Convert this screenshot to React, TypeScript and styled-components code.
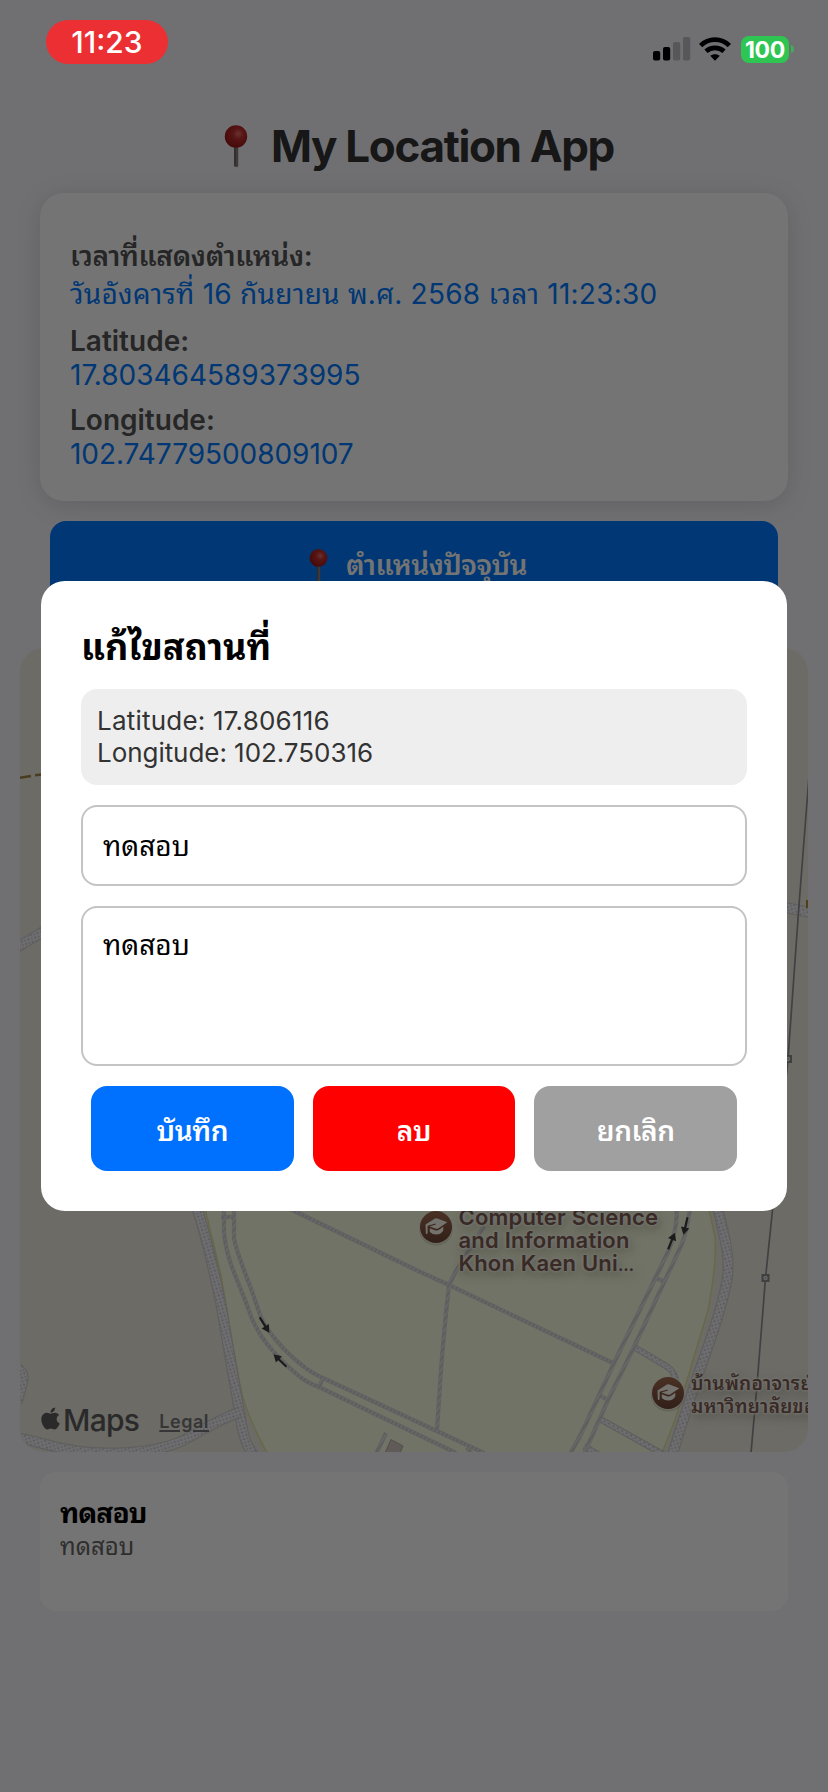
import React from "react";
import styled, { createGlobalStyle } from "styled-components";
import { FaApple } from "react-icons/fa";

const fontStack = `Inter, "Noto Sans Thai Looped", Loma, Waree, "Noto Sans Thai", "Noto Sans", sans-serif`;

const GlobalStyle = createGlobalStyle`
  * { box-sizing: border-box; }
  body {
    margin: 0;
    background: #f6f6fc;
    font-family: ${fontStack};
    -webkit-font-smoothing: antialiased;
  }
`;

const Screen = styled.div`
  position: relative;
  width: 828px;
  height: 1792px;
  overflow: hidden;
  background: #f6f6fc;
`;

const StatusBar = styled.header`
  position: absolute;
  inset: 0 0 auto 0;
  z-index: 3;
  height: 88px;
  padding: 20px 34px 0 46px;
  display: flex;
  justify-content: space-between;
  align-items: flex-start;
`;

const TimePill = styled.div`
  width: 122px;
  height: 44px;
  border-radius: 22px;
  background: #eb2f33;
  color: #fff;
  font-size: 30px;
  font-weight: 500;
  line-height: 45px;
  text-align: center;
`;

const StatusIcons = styled.div`
  display: flex;
  align-items: center;
  margin-top: 15px;
  height: 28px;
`;

const Battery = styled.div`
  width: 48px;
  height: 27px;
  border-radius: 8px;
  margin-left: 10px;
  background: #2fc552;
  color: #fff;
  font-size: 23px;
  font-weight: 700;
  line-height: 28px;
  letter-spacing: -0.3px;
  text-align: center;
`;

const Content = styled.main`
  display: flex;
  flex-direction: column;
  padding-top: 120px;
`;

const Title = styled.h1`
  margin: 0;
  display: flex;
  justify-content: center;
  align-items: center;
  gap: 13px;
  height: 52px;
  font-size: 44px;
  font-weight: 700;
  line-height: 52px;
  letter-spacing: -1.35px;
  color: #333;
`;

const InfoCard = styled.section`
  margin: 21px 40px 0;
  height: 308px;
  padding: 44px 30px 30px;
  border-radius: 24px;
  background: #fff;
  box-shadow: 0 4px 26px rgba(0, 0, 0, 0.13);
  display: flex;
  flex-direction: column;
  gap: 11px;
`;

const Field = styled.div<{ $line?: number }>`
  font-size: 28px;
  line-height: ${(p) => p.$line ?? 34}px;
  white-space: nowrap;
`;

const Label = styled.div<{ $spacing?: number }>`
  font-weight: 600;
  letter-spacing: ${(p) => p.$spacing ?? 0}px;
  color: #555;
`;

const Value = styled.div<{ $spacing?: number }>`
  letter-spacing: ${(p) => p.$spacing ?? 0}px;
  color: #007aff;
`;

const LocateButton = styled.button`
  margin: 20px 50px 0;
  height: 88px;
  border: 0;
  border-radius: 16px;
  background: #007aff;
  color: #fff;
  font: 600 28px/34px ${fontStack};
  letter-spacing: -0.5px;
  display: flex;
  align-items: center;
  justify-content: center;
  gap: 10px;
`;

const MapFrame = styled.section`
  position: relative;
  margin: 39px 20px 0;
  height: 804px;
  border-radius: 24px;
  overflow: hidden;
  background: #edebe0;
`;

const MapCanvas = styled.svg`
  display: block;
`;

const Poi = styled.div<{ $x: number; $y: number }>`
  position: absolute;
  left: ${(p) => p.$x}px;
  top: ${(p) => p.$y}px;
  display: flex;
  align-items: flex-start;
  gap: 6px;
`;

const PoiText = styled.div<{ $size: number; $spacing: number }>`
  margin-top: -2px;
  font-size: ${(p) => p.$size}px;
  line-height: 23px;
  letter-spacing: ${(p) => p.$spacing}px;
  font-weight: 600;
  color: #7d5c50;
  white-space: pre;
  text-shadow: 0 0 3px #fffdf8, 0 0 3px #fffdf8, 0 0 4px #fffdf8, 2px 4px 10px rgba(80, 80, 40, 0.5);
`;

const Ellipsis = styled.span`
  font-size: 16px;
  font-weight: 700;
  line-height: 1;
`;

const Attribution = styled.div`
  position: absolute;
  left: 18px;
  bottom: 13px;
  display: flex;
  align-items: center;
  color: #5d5d5d;
  height: 38px;

  svg {
    margin-bottom: 4px;
  }
`;

const MapsWord = styled.span`
  font-size: 30px;
  font-weight: 500;
  letter-spacing: -0.7px;
  line-height: 38px;
`;

const Legal = styled.a`
  margin-left: 20px;
  font-size: 18px;
  font-weight: 600;
  letter-spacing: 0.5px;
  line-height: 38px;
  color: #777;
  text-decoration: underline;
  text-decoration-thickness: 2px;
  text-underline-offset: 2px;
  padding-top: 3px;
`;

const PlaceCard = styled.article`
  margin: 20px 40px 0;
  height: 139px;
  padding: 22px 20px;
  border-radius: 16px;
  background: #fff;
`;

const PlaceName = styled.div`
  font-size: 28px;
  font-weight: 700;
  line-height: 38px;
  letter-spacing: -0.9px;
  color: #000;
`;

const PlaceNote = styled.div`
  font-size: 24px;
  line-height: 30px;
  color: #666;
`;

const Overlay = styled.div`
  position: absolute;
  inset: 0;
  z-index: 2;
  background: rgba(0, 0, 0, 0.545);
  display: flex;
  align-items: center;
  justify-content: center;
`;

const Modal = styled.div`
  width: 746px;
  height: 630px;
  padding: 40px;
  border-radius: 24px;
  background: #fff;
  display: flex;
  flex-direction: column;
  gap: 20px;
`;

const ModalTitle = styled.h2`
  margin: 0;
  height: 48px;
  font-size: 36px;
  font-weight: 700;
  line-height: 52px;
  white-space: nowrap;
  color: #000;
`;

const Coordinates = styled.div`
  height: 96px;
  padding: 16px;
  border-radius: 16px;
  background: #eee;
  color: #333;
  font-size: 26px;
  line-height: 32px;
`;

const Coordinate = styled.div<{ $spacing: number }>`
  letter-spacing: ${(p) => p.$spacing}px;
`;

const inputStyles = `
  display: block;
  width: 100%;
  border: 2px solid #c4c4c4;
  border-radius: 16px;
  background: #fff;
  color: #000;
  font: 400 28px/38px ${fontStack};
  outline: none;
  resize: none;
  flex: none;
`;

const TextInput = styled.input`
  ${inputStyles}
  height: 81px;
  padding: 0 20px 4px;
`;

const TextArea = styled.textarea`
  ${inputStyles}
  height: 160px;
  padding: 18px 20px;
`;

const Actions = styled.div`
  display: flex;
  justify-content: space-around;
  padding: 0 10px;
  gap: 19px;
`;

const ActionButton = styled.button<{ $tone: string }>`
  flex: 1;
  height: 85px;
  padding: 4px 0 0;
  border: 0;
  border-radius: 16px;
  background: ${(p) => p.$tone};
  color: #fff;
  font: 600 28px/34px ${fontStack};
  letter-spacing: -0.4px;
`;

const PushPin = ({ size, id }: { size: number; id: string }) => (
  <svg width={size} height={size} viewBox="0 0 44 44">
    <defs>
      <radialGradient id={id} cx="0.6" cy="0.38" r="0.65">
        <stop offset="0" stopColor="#e5706a" />
        <stop offset="0.35" stopColor="#c23030" />
        <stop offset="1" stopColor="#981616" />
      </radialGradient>
    </defs>
    <rect x="20.2" y="21" width="4" height="22" rx="1.6" fill="#8b7d7b" />
    <rect x="20.2" y="21" width="1.4" height="21" fill="#6a5b5a" />
    <circle cx="22" cy="12.5" r="11.2" fill={`url(#${id})`} />
  </svg>
);

const GraduationPin = () => (
  <svg width="34" height="38" viewBox="0 0 34 38">
    <defs>
      <linearGradient id="poiFill" x1="0" y1="0" x2="0" y2="1">
        <stop offset="0" stopColor="#a36c50" />
        <stop offset="1" stopColor="#6c4536" />
      </linearGradient>
    </defs>
    <ellipse cx="17" cy="21" rx="17" ry="16.5" fill="#000" opacity="0.12" />
    <circle cx="17" cy="19" r="17" fill="#f7f3ea" opacity="0.7" />
    <circle cx="17" cy="19" r="16" fill="url(#poiFill)" />
    <path d="M6.5 16.5 L16 10.5 Q17.2 10 18.5 10.5 L28.3 14.2 L19.5 20.3 Q18 21.2 16.3 20.6 L10.5 18.4 L17 16.6 L16.6 15.6 L8.6 17.7 V24.5 Q8.6 26 7.6 26 Q6.5 26 6.8 24.5 Z" fill="#fffaf0" />
    <path d="M10.8 20.2 L16 22.3 Q18 23 20 21.8 L24.3 18.8 V22.5 Q22 26.5 17.3 26.6 Q13.5 26.6 10.8 24 Z" fill="#fffaf0" />
  </svg>
);

const trails = [
  "M197 1208 C207 1240 216 1280 222 1310 C230 1360 236 1390 240 1415 C243 1436 246 1446 256 1458",
  "M240 1412 C215 1421 200 1432 180 1442 C150 1454 100 1456 65 1449 C45 1445 32 1440 18 1438",
  "M17 1368 Q24 1372 23 1380 Q21 1390 17 1403",
  "M717 1205 C724 1235 732 1260 726 1285 C718 1325 704 1355 693 1390 C685 1415 678 1435 671 1460",
  "M16 948 L44 931",
  "M783 907 L812 913",
];

const smallTrails = [
  "M634 1347 L666 1366 Q676 1372 676 1384",
  "M600 1419 L668 1457",
  "M584 1446 L602 1457",
];

const lanes = [
  "M224 1208 V1232 C226 1260 240 1285 248 1308 C256 1335 275 1356 300 1377 Q308 1383 319 1387 L456 1453",
  "M234 1208 V1238 C237 1256 248 1278 258 1309 C264 1330 285 1352 303 1366 Q310 1372 323 1378 L484 1453",
  "M221 1217 H236",
  "M323 1378 L319 1387",
  "M288 1208 L414 1269 L449 1285 L613 1363",
  "M449 1285 L456 1271 L484 1226",
  "M449 1285 Q444 1330 441 1370 L437 1430",
  "M677 1208 Q677 1232 668 1252 L614 1363 L582 1432 Q577 1442 570 1454",
  "M690 1208 Q687 1232 681 1246 L634 1347 L609 1398 L584 1454",
  "M655 1278 L663 1281",
  "M599 1395 L608 1400",
  "M386 1433 L376 1454",
  "M467 1448 L472 1454",
];

const arrows = [
  { x: 264.5, y: 1325, angle: 58 },
  { x: 280, y: 1360.5, angle: 224 },
  { x: 671.5, y: 1241, angle: -68 },
  { x: 685.5, y: 1226, angle: 103 },
];

const StreetMap = () => (
  <MapCanvas width="788" height="804" viewBox="20 648 788 804">
    <defs>
      <pattern id="stipple" width="5" height="5" patternUnits="userSpaceOnUse" patternTransform="rotate(28)">
        <rect width="5" height="5" fill="#f2f2f6" />
        <circle cx="1.2" cy="1.2" r="0.9" fill="#b9b9be" />
        <circle cx="3.7" cy="3.7" r="0.9" fill="#c8c8cc" />
      </pattern>
      <pattern id="hatch" width="4" height="4" patternUnits="userSpaceOnUse" patternTransform="rotate(35)">
        <rect width="4" height="4" fill="#e2e2e4" />
        <rect width="2" height="4" fill="#cdcdd2" />
      </pattern>
    </defs>
    <path
      d="M203 1200 L221 1275 L232 1340 L240 1385 Q245 1412 267 1453 H662 L675 1420 L690 1370 L708 1310 Q717 1262 715 1237 L707 1200 Z"
      fill="#f8fce0"
      stroke="#e4e49c"
      strokeWidth="1.4"
    />
    {trails.map((d) => (
      <g key={d} fill="none">
        <path d={d} stroke="#d2d1cf" strokeWidth="11" />
        <path d={d} stroke="url(#stipple)" strokeWidth="8.5" />
      </g>
    ))}
    {smallTrails.map((d) => (
      <g key={d} fill="none">
        <path d={d} stroke="#cbcbcb" strokeWidth="6.5" />
        <path d={d} stroke="url(#stipple)" strokeWidth="4.5" />
      </g>
    ))}
    {lanes.map((d) => (
      <g key={d} fill="none">
        <path d={d} stroke="#d6d7cf" strokeWidth="4.2" />
        <path d={d} stroke="url(#hatch)" strokeWidth="3" />
      </g>
    ))}
    <path d="M385 1453 L391 1439.5 L403 1446 L400 1453 Z" fill="#d3c8c1" stroke="#b8aaa4" />
    <path d="M809 776 L799 905 L788 1059 L765.5 1278 L757 1385 L751 1453" fill="none" stroke="#8f8f92" strokeWidth="1.7" />
    {[[788, 1059], [765.5, 1278]].map(([x, y]) => (
      <g key={x}>
        <rect x={x - 4} y={y - 4} width="8" height="8" fill="#8a8a8d" />
        <circle cx={x} cy={y} r="2.2" fill="#e8e8e8" />
        <circle cx={x} cy={y} r="0.8" fill="#8a8a8d" />
      </g>
    ))}
    <path d="M18 778 L31 776 M35 775.3 L46 774" stroke="#a18449" strokeWidth="2.6" />
    <rect x="806" y="900" width="5" height="8" fill="#b58a35" />
    {arrows.map((a) => (
      <g key={a.x} transform={`translate(${a.x} ${a.y}) rotate(${a.angle})`}>
        <path d="M-9 0 H4" stroke="#3c3c3c" strokeWidth="2.2" />
        <path d="M9 0 L1.5 -4.3 V4.3 Z" fill="#3c3c3c" />
      </g>
    ))}
  </MapCanvas>
);

const SignalIcon = () => (
  <svg width="38" height="24" viewBox="0 0 38 24">
    <rect x="0" y="14" width="7.2" height="9.4" rx="2" fill="#000" />
    <rect x="10" y="10" width="7.2" height="13.4" rx="2" fill="#000" />
    <rect x="20" y="5" width="7.2" height="18.4" rx="2" fill="#57575a" />
    <rect x="30" y="0" width="7.2" height="23.4" rx="2" fill="#57575a" />
  </svg>
);

const WifiIcon = styled.svg`
  margin-left: 8px;
`;

export default function App() {
  return (
    <>
      <GlobalStyle />
      <Screen>
        <StatusBar>
          <TimePill>11:23</TimePill>
          <StatusIcons>
            <SignalIcon />
            <WifiIcon width="32" height="24" viewBox="0 0 32 24">
              <g fill="none" stroke="#000" strokeWidth="4.7">
                <path d="M1.6 8.6 C9.5 0.6 22.5 0.6 30.4 8.6" />
                <path d="M7 14.3 C12 9.6 20 9.6 25 14.3" />
              </g>
              <path d="M11.2 18.8 C14 16.6 18 16.6 20.8 18.8 L16 23.8 Z" fill="#000" />
            </WifiIcon>
            <Battery>100</Battery>
            <svg width="5" height="10" viewBox="0 0 5 10">
              <path d="M2 0.8 Q5 2 5 5 Q5 8 2 9.2 Z" fill="#3fae57" />
            </svg>
          </StatusIcons>
        </StatusBar>

        <Content>
          <Title>
            <PushPin size={44} id="titlePin" />
            <span>My Location App</span>
          </Title>

          <InfoCard>
            <Field $line={38}>
              <Label $spacing={-0.35}>เวลาที่แสดงตำแหน่ง:</Label>
              <Value $spacing={0.24}>วันอังคารที่ 16 กันยายน พ.ศ. 2568 เวลา 11:23:30</Value>
            </Field>
            <Field>
              <Label>Latitude:</Label>
              <Value>17.803464589373995</Value>
            </Field>
            <Field>
              <Label>Longitude:</Label>
              <Value $spacing={-0.05}>102.74779500809107</Value>
            </Field>
          </InfoCard>

          <LocateButton>
            <PushPin size={35} id="buttonPin" />
            <span>ตำแหน่งปัจจุบัน</span>
          </LocateButton>

          <MapFrame>
            <StreetMap />
            <Poi $x={398.5} $y={560}>
              <GraduationPin />
              <PoiText $size={22} $spacing={0.2}>
                {"Computer Science\nand Information\nKhon Kaen Uni"}
                <Ellipsis>…</Ellipsis>
              </PoiText>
            </Poi>
            <Poi $x={631} $y={726}>
              <GraduationPin />
              <PoiText $size={19} $spacing={0.3}>
                {"บ้านพักอาจารย์\nมหาวิทยาลัยขอนแก่น"}
              </PoiText>
            </Poi>
            <Attribution>
              <FaApple size={25} />
              <MapsWord>Maps</MapsWord>
              <Legal>Legal</Legal>
            </Attribution>
          </MapFrame>

          <PlaceCard>
            <PlaceName>ทดสอบ</PlaceName>
            <PlaceNote>ทดสอบ</PlaceNote>
          </PlaceCard>
        </Content>

        <Overlay>
          <Modal>
            <ModalTitle>แก้ไขสถานที่</ModalTitle>
            <Coordinates>
              <Coordinate $spacing={0.22}>Latitude: 17.806116</Coordinate>
              <Coordinate $spacing={-0.05}>Longitude: 102.750316</Coordinate>
            </Coordinates>
            <TextInput defaultValue="ทดสอบ" />
            <TextArea defaultValue="ทดสอบ" />
            <Actions>
              <ActionButton $tone="#0070ff">บันทึก</ActionButton>
              <ActionButton $tone="#ff0000">ลบ</ActionButton>
              <ActionButton $tone="#a0a0a0">ยกเลิก</ActionButton>
            </Actions>
          </Modal>
        </Overlay>
      </Screen>
    </>
  );
}
